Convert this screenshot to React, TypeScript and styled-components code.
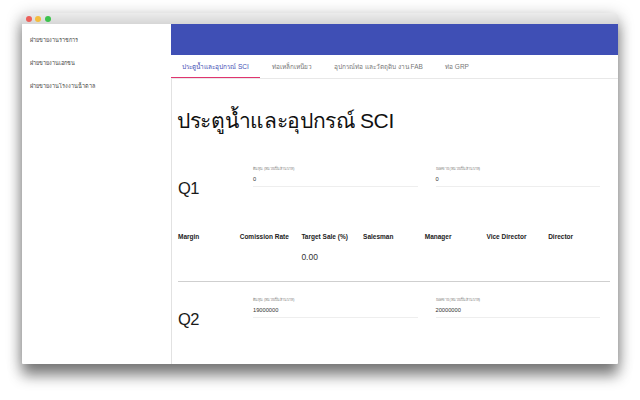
import React from "react";
import styled, { createGlobalStyle } from "styled-components";

const Global = createGlobalStyle`
  html, body { margin: 0; padding: 0; width: 640px; height: 400px; overflow: hidden; background: #fff; }
  body { font-family: "Liberation Sans", "Noto Sans", sans-serif; color: #1a1a1a; }
  * { box-sizing: border-box; }
`;
const Page = styled.div`
  width: 640px;
  height: 400px;
  padding: 13px 22px 36px;
`;
const Window = styled.div`
  height: 351px;
  display: flex;
  flex-direction: column;
  overflow: hidden;
  border-radius: 2px 2px 1px 1px;
  background: #fff;
  box-shadow: 0 12px 14px rgba(0, 0, 0, 0.42), 0 3px 16px rgba(0, 0, 0, 0.28);
`;
const TitleBar = styled.div`
  height: 11px;
  flex: none;
  display: flex;
  align-items: center;
  gap: 3.5px;
  padding-left: 3.5px;
  background: linear-gradient(#ececec, #d6d6d6);
`;
const Light = styled.span<{ $c: string }>`
  width: 6px;
  height: 6px;
  border-radius: 50%;
  background: ${(p) => p.$c};
`;
const Body = styled.div`
  flex: 1;
  min-height: 0;
  display: flex;
`;
const Sidebar = styled.nav`
  width: 149px;
  flex: none;
  display: flex;
  flex-direction: column;
  gap: 7.5px;
  padding: 9px 0 0 8px;
`;
const SideItem = styled.div`
  height: 15.5px;
  line-height: 15.5px;
  font-size: 5.5px;
  color: #444;
`;
const Main = styled.main`
  flex: 1;
  min-width: 0;
  display: flex;
  flex-direction: column;
`;
const AppBar = styled.div`
  height: 31px;
  flex: none;
  background: #3f4fb5;
`;
const Tabs = styled.div`
  height: 24px;
  flex: none;
  display: flex;
  border-bottom: 1px solid #e8e8e8;
`;
const Tab = styled.div<{ $active?: boolean; $w: number }>`
  width: ${(p) => p.$w}px;
  height: 23px;
  line-height: 23px;
  text-align: center;
  font-size: 6.5px;
  white-space: nowrap;
  color: ${(p) => (p.$active ? "#3f4fb5" : "#777")};
  border-bottom: ${(p) => (p.$active ? "1px solid #e0356f" : "none")};
`;
const Content = styled.div`
  flex: 1;
  padding: 26px 7px 0 6px;
  overflow: hidden;
  border-left: 1px solid #e2e2e2;
`;
const Heading = styled.h1`
  margin: 0 0 18px -1px;
  height: 32px;
  line-height: 32px;
  font-size: 21px;
  letter-spacing: -0.35px;
  font-weight: 400;
  color: #111;
`;
const Quarter = styled.section`
  display: flex;
  height: 32px;
  align-items: flex-end;
`;
const QLabel = styled.div`
  width: 75px;
  flex: none;
  font-size: 16.5px;
  letter-spacing: -0.5px;
  line-height: 20px;
  margin-bottom: -11px;
`;
const Fields = styled.div`
  display: flex;
  gap: 18px;
  width: 347px;
`;
const Field = styled.div`
  flex: 1;
  height: 21px;
  border-bottom: 1px solid #eeeeee;
`;
const FieldLabel = styled.div`
  font-size: 3.7px;
  line-height: 7px;
  color: #8a8a8a;
`;
const FieldValue = styled.div`
  font-size: 5.7px;
  line-height: 12px;
  color: #333;
`;
const Table = styled.div`
  display: grid;
  grid-template-columns: repeat(7, 61.7px);
  margin-top: 45px;
`;
const Th = styled.div`
  font-size: 6.5px;
  line-height: 10px;
  font-weight: 700;
  color: #222;
  white-space: nowrap;
`;
const Td = styled.div<{ $col: number }>`
  grid-column: ${(p) => p.$col};
  margin-top: 9px;
  font-size: 8.5px;
  line-height: 12px;
  color: #333;
`;
const Divider = styled.hr`
  margin: 18px 0 4px;
  width: 432px;
  height: 1px;
  border: 0;
  background: #cfcfcf;
`;

const field = ["ต้นทุน (หน่วยเป็นล้านบาท)", "ยอดขาย (หน่วยเป็นล้านบาท)"];
const columns = ["Margin", "Comission Rate", "Target Sale (%)", "Salesman", "Manager", "Vice Director", "Director"];

const Row = ({ q, a, b }: { q: string; a: string; b: string }) => (
  <Quarter>
    <QLabel>{q}</QLabel>
    <Fields>
      <Field>
        <FieldLabel>{field[0]}</FieldLabel>
        <FieldValue>{a}</FieldValue>
      </Field>
      <Field>
        <FieldLabel>{field[1]}</FieldLabel>
        <FieldValue>{b}</FieldValue>
      </Field>
    </Fields>
  </Quarter>
);

export default function App() {
  return (
    <>
      <Global />
      <Page>
        <Window>
          <TitleBar>
            <Light $c="#ec5f5a" />
            <Light $c="#f4bd3f" />
            <Light $c="#3cc24d" />
          </TitleBar>
          <Body>
            <Sidebar>
              <SideItem>ฝ่ายขายงานราชการ</SideItem>
              <SideItem>ฝ่ายขายงานเอกชน</SideItem>
              <SideItem>ฝ่ายขายงานโรงงานน้ำตาล</SideItem>
            </Sidebar>
            <Main>
              <AppBar />
              <Tabs>
                <Tab $active $w={89}>ประตูน้ำและอุปกรณ์ SCI</Tab>
                <Tab $w={63}>ท่อเหล็กเหนียว</Tab>
                <Tab $w={111}>อุปกรณ์ท่อ และวัตถุดิบ งาน FAB</Tab>
                <Tab $w={46}>ท่อ GRP</Tab>
              </Tabs>
              <Content>
                <Heading>ประตูน้ำและอุปกรณ์ SCI</Heading>
                <Row q="Q1" a="0" b="0" />
                <Table>
                  {columns.map((c) => (
                    <Th key={c}>{c}</Th>
                  ))}
                  <Td $col={3}>0.00</Td>
                </Table>
                <Divider />
                <Row q="Q2" a="19000000" b="20000000" />
              </Content>
            </Main>
          </Body>
        </Window>
      </Page>
    </>
  );
}
